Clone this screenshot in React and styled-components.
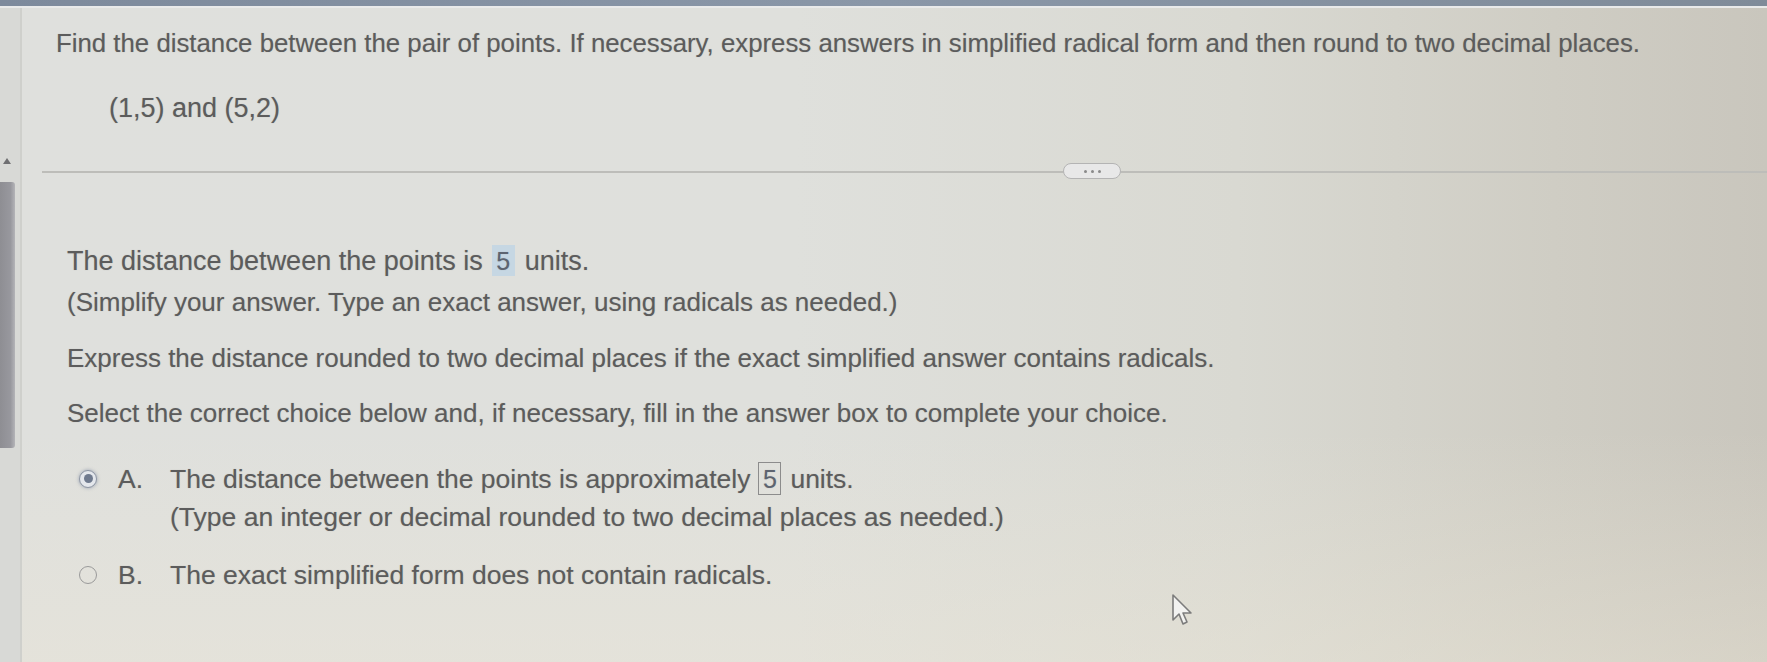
import React from "react";
import styled, { createGlobalStyle } from "styled-components";

const Global = createGlobalStyle`
  html, body { margin: 0; padding: 0; }
  body {
    width: 1767px;
    height: 662px;
    overflow: hidden;
    font-family: "Liberation Sans", Arial, sans-serif;
  }
`;

const Screen = styled.div`
  position: relative;
  width: 1767px;
  height: 662px;
  overflow: hidden;
  display: flex;
  flex-direction: column;
  background:
    linear-gradient(180deg, rgba(255,255,255,0) 0%, rgba(255,255,255,0) 65%, rgba(236,230,214,0.4) 100%),
    linear-gradient(90deg, #dfe0dd 0%, #dfe0dc 45%, #d9d9d2 70%, #cfcdc4 88%, #c9c6bd 100%);
  color: #5c5c5c;
`;

const TopBar = styled.div`
  height: 6px;
  flex: none;
  background: linear-gradient(90deg, #7d8a9c, #8a97a8 50%, #7f8b99);
  border-bottom: 2px solid #e9eaea;
`;

const Body = styled.div`
  flex: 1;
  display: flex;
  min-height: 0;
`;

const Gutter = styled.div`
  width: 20px;
  flex: none;
  display: flex;
  flex-direction: column;
  align-items: flex-start;
  background: #d8d9d6;
  border-right: 2px solid #cfd0cc;
`;

const ScrollArrow = styled.div`
  margin-top: 150px;
  margin-left: 3px;
  width: 0;
  height: 0;
  border-left: 4px solid transparent;
  border-right: 4px solid transparent;
  border-bottom: 6px solid #6f6f72;
`;

const ScrollThumb = styled.div`
  margin-top: 18px;
  width: 15px;
  height: 266px;
  background: linear-gradient(90deg, #8e8e93, #98989e 70%, #b4b4b8);
  border-radius: 0 3px 3px 0;
`;

const Main = styled.div`
  flex: 1;
  display: flex;
  flex-direction: column;
  padding-left: 20px;
`;

const Text = styled.div`
  font-size: ${(p) => p.$size || 26}px;
  line-height: ${(p) => p.$lh || 28}px;
  margin-top: ${(p) => p.$top || 0}px;
  margin-left: ${(p) => p.$left || 0}px;
  white-space: nowrap;
  text-shadow: 0 0 1px rgba(90, 90, 90, 0.35);
  display: flex;
  align-items: center;
`;

const Divider = styled.div`
  position: relative;
  margin-top: ${(p) => p.$top}px;
  height: 2px;
  background: #bdbdb9;
  display: flex;
  align-items: center;
`;

const MorePill = styled.button`
  position: absolute;
  left: 1021px;
  top: -8px;
  width: 58px;
  height: 16px;
  border: 1px solid #b4b4b4;
  border-radius: 8px;
  background: #e8e8e8;
  padding: 0;
  display: flex;
  align-items: center;
  justify-content: center;
  gap: 4px;
`;

const Dot = styled.span`
  width: 3px;
  height: 3px;
  border-radius: 50%;
  background: #8a8a8a;
`;

const AnswerBox = styled.span`
  display: inline-flex;
  align-items: center;
  justify-content: center;
  box-sizing: border-box;
  width: 23px;
  height: ${(p) => (p.$filled ? 31 : 33)}px;
  margin: 0 ${(p) => (p.$filled ? 10 : 9)}px 0 ${(p) => (p.$filled ? 9 : 8)}px;
  background: ${(p) => (p.$filled ? "#c6d7e3" : "transparent")};
  border: ${(p) => (p.$filled ? "none" : "1.5px solid #8c8c8c")};
  color: #5d6470;
  font-size: 25px;
`;

const ChoiceRow = styled.div`
  display: flex;
  align-items: center;
  margin-top: ${(p) => p.$top}px;
  font-size: 26.5px;
  line-height: 30px;
  white-space: nowrap;
  text-shadow: 0 0 1px rgba(90, 90, 90, 0.35);
`;

const Radio = styled.span`
  width: 18px;
  height: 18px;
  border-radius: 50%;
  border: 1.5px solid ${(p) => (p.$checked ? "#8d95a3" : "#9a9a9a")};
  background: ${(p) => (p.$checked ? "#e4e7ec" : "transparent")};
  display: inline-flex;
  align-items: center;
  justify-content: center;
  box-sizing: border-box;
  box-shadow: ${(p) => (p.$checked ? "0 0 3px 1px rgba(140,150,170,0.5)" : "none")};
  margin-left: 37px;
`;

const RadioDot = styled.span`
  width: 9px;
  height: 9px;
  border-radius: 50%;
  background: #6f7a8e;
`;

const Letter = styled.span`
  width: 52px;
  margin-left: 21px;
`;

const Cursor = styled.svg`
  position: absolute;
  left: 1171px;
  top: 593px;
  width: 24px;
  height: 36px;
`;

export default function App() {
  return (
    <>
      <Global />
      <Screen>
        <TopBar />
        <Body>
          <Gutter>
            <ScrollArrow />
            <ScrollThumb />
          </Gutter>
          <Main>
            <Text $size={25.8} $top={21} $left={14}>
              Find the distance between the pair of points. If necessary, express answers in simplified radical form and then round to two decimal places.
            </Text>
            <Text $size={27} $top={37} $left={67}>
              (1,5) and (5,2)
            </Text>
            <Divider $top={49}>
              <MorePill aria-label="more">
                <Dot />
                <Dot />
                <Dot />
              </MorePill>
            </Divider>
            <Text $size={27} $top={72} $left={25}>
              The distance between the points is
              <AnswerBox $filled>5</AnswerBox>
              units.
            </Text>
            <Text $top={12} $left={25}>
              (Simplify your answer. Type an exact answer, using radicals as needed.)
            </Text>
            <Text $top={28} $left={25}>
              Express the distance rounded to two decimal places if the exact simplified answer contains radicals.
            </Text>
            <Text $top={27} $left={25}>
              Select the correct choice below and, if necessary, fill in the answer box to complete your choice.
            </Text>
            <ChoiceRow $top={35}>
              <Radio $checked>
                <RadioDot />
              </Radio>
              <Letter>A.</Letter>
              The distance between the points is approximately
              <AnswerBox>5</AnswerBox>
              units.
            </ChoiceRow>
            <Text $size={26.5} $top={8} $left={128}>
              (Type an integer or decimal rounded to two decimal places as needed.)
            </Text>
            <ChoiceRow $top={29}>
              <Radio />
              <Letter>B.</Letter>
              The exact simplified form does not contain radicals.
            </ChoiceRow>
          </Main>
        </Body>
        <Cursor viewBox="0 0 24 36">
          <path
            d="M2 2 L2 27 L8 21 L12 31 L16 29 L12 20 L20 20 Z"
            fill="#f2f2f0"
            stroke="#7c7c7c"
            strokeWidth="1.6"
            strokeLinejoin="round"
          />
        </Cursor>
      </Screen>
    </>
  );
}
